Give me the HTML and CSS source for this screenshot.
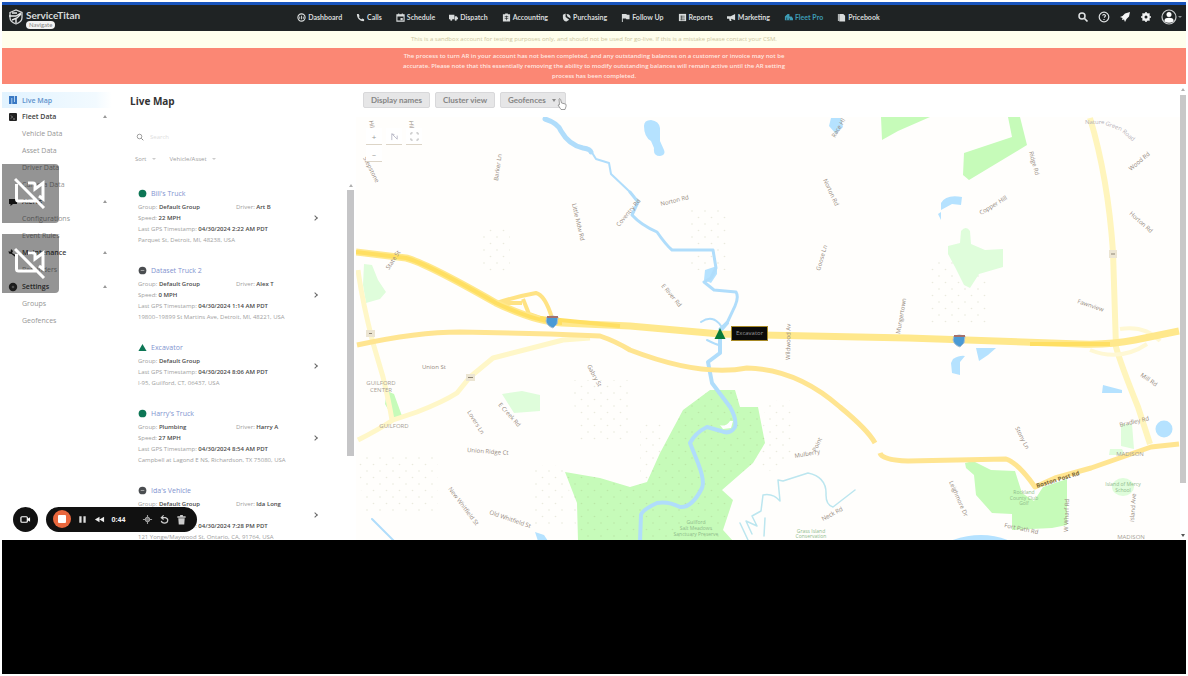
FILE: index.html
```html
<!DOCTYPE html>
<html lang="en">
<head>
<meta charset="utf-8">
<title>Live Map</title>
<link rel="stylesheet" href="styles.css">
</head>
<body>
<div class="stage">
<div class="app">
  <header class="topbar">
    <div class="brand">
      <svg class="brand-mark" viewBox="0 0 16 16"><path d="M2 3.500 8 1l6 2.500v5C14 12 11 14 8 15 5 14 2 12 2 8.500z" fill="none" stroke="#d5d8d9" stroke-width="1.300"/><path d="M1 7h7l5-3M4 11l5-2 4-4M4 4h5M8 9v5" fill="none" stroke="#e8eaea" stroke-width="1.400"/></svg>
      <div class="brand-text"><strong>ServiceTitan</strong><span class="tag">Navigate</span></div>
    </div>
    <nav class="nav">
      <a href="#"><svg viewBox="0 0 10 10"><circle cx="5" cy="5" r="4" fill="none" stroke="currentColor" stroke-width="1.300"/><path d="M3 6.500V4M5 7V3M7 6.500V4" stroke="currentColor"/></svg>Dashboard</a>
      <a href="#"><svg viewBox="0 0 10 10"><path d="M1 1h2l1 2.500-1 1C4 6 5 6.500 6 7l1-1 2 1v2C5 9.500 1 6 1 1z" fill="currentColor"/></svg>Calls</a>
      <a href="#"><svg viewBox="0 0 10 10"><path d="M1 2h8v7H1zM3 .5v2M7 .5v2" fill="none" stroke="currentColor" stroke-width="1.200"/><path d="M1 2h8v2H1zM5 5.500h2.500V8H5z" fill="currentColor"/></svg>Schedule</a>
      <a href="#"><svg viewBox="0 0 10 10"><path d="M0 2h6v5H0zM6.500 3.500H8.500L10 5.500V7H6.500z" fill="currentColor"/><circle cx="2.500" cy="7.500" r="1.200" fill="currentColor"/><circle cx="7.500" cy="7.500" r="1.200" fill="currentColor"/></svg>Dispatch</a>
      <a href="#"><svg viewBox="0 0 10 10"><path d="M1 1.500h2.500V.5h3v1H9V9.500H1z" fill="currentColor"/><path d="M3 4h4M3 6h4M5 3v5" stroke="#1f2324" stroke-width=".7"/></svg>Accounting</a>
      <a href="#"><svg viewBox="0 0 10 10"><path d="M1 2 4 .5v4l4 3L5 9.500Q1 9 1 5zM5 1q5 0 4.500 5L6 4z" fill="currentColor"/></svg>Purchasing</a>
      <a href="#"><svg viewBox="0 0 10 10"><path d="M1 1h5l.5 1H9.500v5H6l-.5-1H2v4H1z" fill="currentColor"/></svg>Follow Up</a>
      <a href="#"><svg viewBox="0 0 10 10"><path d="M1 1h8v8H1z" fill="currentColor"/><path d="M2.500 3.500h5M2.500 5.500h5M2.500 7.500h5M4 3v5" stroke="#1f2324" stroke-width=".6"/></svg>Reports</a>
      <a href="#"><svg viewBox="0 0 10 10"><path d="M0 3.500h4L9 1v7L4.500 6.500 5 9H3L2.300 6.500H0z" fill="currentColor"/></svg>Marketing</a>
      <a href="#" class="active"><svg viewBox="0 0 10 10"><path d="M1 8V4l3-3h2v3h2.500L10 6v2zM1 9.500h8" fill="currentColor"/><path d="M3 8V5M6 8V6" stroke="#1f2324" stroke-width=".7"/></svg>Fleet Pro</a>
      <a href="#"><svg viewBox="0 0 10 10"><path d="M1 1h1v8H1zM2.500 1H7l2 2v6.500H2.500z" fill="currentColor"/></svg>Pricebook</a>
    </nav>
    <div class="tools">
      <button aria-label="Search"><svg viewBox="0 0 12 12"><circle cx="5" cy="5" r="3" fill="none" stroke="#dfe2e3" stroke-width="1.500"/><path d="m7.500 7.500 3 3" stroke="#dfe2e3" stroke-width="1.700"/></svg></button>
      <button aria-label="Help"><svg viewBox="0 0 12 12"><circle cx="6" cy="6" r="4.800" fill="none" stroke="#dfe2e3" stroke-width="1.200"/><path d="M4.500 4.500Q6 2.500 7.500 4.500 7.500 5.500 6 6.500M6 8v1" fill="none" stroke="#dfe2e3" stroke-width="1.200"/></svg></button>
      <button aria-label="What's new"><svg viewBox="0 0 12 12"><path d="M11 1 6 2.500 3.500 5 1 6l2.500 1L3 9l2-.5L6 11l1.500-3L10 5.500z" fill="#f4f5f5"/></svg></button>
      <button aria-label="Settings"><svg viewBox="0 0 12 12"><circle cx="6" cy="6" r="2.700" fill="none" stroke="#f4f5f5" stroke-width="2.400"/><path d="M6 1v1.500M6 9.500V11M1 6h1.500M9.500 6H11M2.500 2.500l1 1M8.500 8.500l1 1M9.500 2.500l-1 1M3.500 8.500l-1 1" stroke="#f4f5f5" stroke-width="1.500"/></svg></button>
      <button class="account" aria-label="Account"><svg viewBox="0 0 16 16"><circle cx="8" cy="8" r="7" fill="none" stroke="#c9cccd" stroke-width="1.200"/><circle cx="8" cy="5.500" r="2.500" fill="#fff"/><path d="M3.500 12.500V11Q4 8.800 8 8.800T12.500 11v1.500Q8 15 3.500 12.500z" fill="#fff"/></svg><svg class="tiny" viewBox="0 0 6 6"><path d="M1 2h4L3 4z" fill="#8c9092"/></svg></button>
    </div>
  </header>
  <p class="notice">This is a sandbox account for testing purposes only, and should not be used for go-live. If this is a mistake please contact your CSM.</p>
  <p class="alert">The process to turn AR in your account has not been completed, and any outstanding balances on a customer or invoice may not be<br>accurate. Please note that this essentially removing the ability to modify outstanding balances will remain active until the AR setting<br>process has been completed.</p>

  <div class="body">
    <aside class="side">
      <a href="#" class="head current"><svg viewBox="0 0 10 10"><path d="M1 1h8v8H1z" fill="#3a79c4"/><path d="M3.800 3v6M6.500 1v6" stroke="#cfe6fa" stroke-width=".8"/></svg>Live Map</a>
      <button class="head"><svg viewBox="0 0 10 10"><rect x="1" y="1" width="8" height="8" rx="1" fill="#222"/><path d="m3 3.500 1.500 1.500L3 6.500M5 7h2" stroke="#aaa" fill="none" stroke-width=".8"/></svg>Fleet Data<i></i></button>
      <a href="#">Vehicle Data</a><a href="#">Asset Data</a><a href="#">Driver Data</a><a href="#">Camera Data</a>
      <button class="head"><svg viewBox="0 0 10 10"><path d="M1 2h8v5H5L2.500 9V7H1z" fill="#222"/></svg>Alerts<i></i></button>
      <a href="#">Configurations</a><a href="#">Event Rules</a>
      <button class="head"><svg viewBox="0 0 10 10"><path d="M3 1 5 3 4 5 9 8 8 9.500 3.500 6 1 5.500.5 3 2.500 4z" fill="#222"/></svg>Maintenance<i></i></button>
      <a href="#">Reminders</a>
      <button class="head"><svg viewBox="0 0 10 10"><circle cx="5" cy="5" r="4.200" fill="#333"/><circle cx="5" cy="5" r="1.300" fill="#888"/></svg>Settings<i></i></button>
      <a href="#">Groups</a><a href="#">Geofences</a>
    </aside>

    <section class="list">
      <h1>Live Map</h1>
      <label class="search"><svg viewBox="0 0 8 8"><circle cx="3.500" cy="3.500" r="2.300" fill="none" stroke="#888" stroke-width=".8"/><path d="m5.300 5.300 2 2" stroke="#888"/></svg><input type="text" placeholder="Search" aria-label="Search"></label>
      <div class="sort"><button>Sort<i></i></button><button>Vehicle/Asset<i></i></button></div>
      <div class="cards">
        <article class="card">
          <h2><svg viewBox="0 0 10 10"><circle cx="5" cy="5" r="4.300" fill="#0d7655"/></svg><a href="#">Bill's Truck</a></h2>
          <div class="pair"><p>Group: <b>Default Group</b></p><p>Driver: <b>Art B</b></p></div>
          <p>Speed: <b>22 MPH</b></p>
          <p>Last GPS Timestamp: <b>04/30/2024 2:22 AM PDT</b></p>
          <p>Parquet St, Detroit, MI, 48238, USA</p><span class="go"></span>
        </article>
        <article class="card">
          <h2><svg viewBox="0 0 10 10"><circle cx="5" cy="5" r="4.300" fill="#4a4d50"/><path d="M3 5h4" stroke="#aaa"/></svg><a href="#">Dataset Truck 2</a></h2>
          <div class="pair"><p>Group: <b>Default Group</b></p><p>Driver: <b>Alex T</b></p></div>
          <p>Speed: <b>0 MPH</b></p>
          <p>Last GPS Timestamp: <b>04/30/2024 1:14 AM PDT</b></p>
          <p>19800–19899 St Martins Ave, Detroit, MI, 48221, USA</p><span class="go"></span>
        </article>
        <article class="card">
          <h2><svg viewBox="0 0 10 10"><path d="m5 1 4.500 8h-9z" fill="#0d7655"/></svg><a href="#">Excavator</a></h2>
          <p>Group: <b>Default Group</b></p>
          <p>Last GPS Timestamp: <b>04/30/2024 8:06 AM PDT</b></p>
          <p>I-95, Guilford, CT, 06437, USA</p><span class="go"></span>
        </article>
        <article class="card">
          <h2><svg viewBox="0 0 10 10"><circle cx="5" cy="5" r="4.300" fill="#0d7655"/></svg><a href="#">Harry's Truck</a></h2>
          <div class="pair"><p>Group: <b>Plumbing</b></p><p>Driver: <b>Harry A</b></p></div>
          <p>Speed: <b>27 MPH</b></p>
          <p>Last GPS Timestamp: <b>04/30/2024 8:54 AM PDT</b></p>
          <p>Campbell at Lagond E NS, Richardson, TX 75080, USA</p><span class="go"></span>
        </article>
        <article class="card">
          <h2><svg viewBox="0 0 10 10"><circle cx="5" cy="5" r="4.300" fill="#4a4d50"/><path d="M3 5h4" stroke="#aaa"/></svg><a href="#">Ida's Vehicle</a></h2>
          <div class="pair"><p>Group: <b>Default Group</b></p><p>Driver: <b>Ida Long</b></p></div>
          <p>Speed: <b>0 MPH</b></p>
          <p>Last GPS Timestamp: <b>04/30/2024 7:28 PM PDT</b></p>
          <p>121 Yonge/Maywood St, Ontario, CA, 91764, USA</p><span class="go"></span>
        </article>
      </div>
      <div class="list-scroll"><i></i><span></span></div>
    </section>

    <main class="map-pane">
      <div class="map-tools">
        <button>Display names</button><button>Cluster view</button><button class="drop">Geofences<i></i>
        <svg class="cursor" viewBox="0 0 10 12"><path d="M2 1q1-1 1.600.5L4.500 5 8.500 6q1 .6.500 2.500L8 11.500H4L1 7l1.500-.3z" fill="#fff" stroke="#777" stroke-width=".7"/></svg></button>
      </div>
      <div class="map">
        <svg class="map-art" viewBox="356 117 824 424" preserveAspectRatio="xMinYMin slice">
          <defs><pattern id="dots" width="13" height="13" patternUnits="userSpaceOnUse"><circle cx="3" cy="3" r=".8" fill="#8a8f50" opacity=".18"/><circle cx="9.500" cy="9.500" r=".8" fill="#8a8f50" opacity=".18"/></pattern></defs>
          <rect x="356" y="117" width="824" height="424" fill="#fffefc"/>
          <g fill="url(#dots)">
            <path d="M358 455h80v60h-75zM535 465h30v60h-30zM765 400h30v60l-35 15zM640 420h25v60h-25zM930 260h60v65h-60zM570 380h60v60h-50zM480 225h30v50h-30zM690 210h40v60h-40z"/>
          </g>
          <g fill="#c6fbb9">
            <path d="M881 117h49l-32 14-16 9zM1008 117h12l7 28-58 35-6-5 1-22 48-16z"/>
            <path d="m565 472 35 6 30 9 17-5 13-29 23-43 27-20h25l5 17h18l7 36-12 20-31 27 11 10-10 30 10 11H578l-1-38z"/>
            <path d="m965 463 8-2 18 9 24 1 7 22 12 8 9-14 24-8v46l-15 3-40 2v-16l-20-1-16-18-2-20-8-7z"/>
            <path d="m387 391 7 3 8 22-9 2-8-14z"/>
          </g>
          <path d="m565 472 35 6 30 9 17-5 13-29 23-43 27-20h25l5 17h18l7 36-12 20-31 27 11 10-10 30 10 11H578z" fill="url(#dots)"/>
          <g fill="#dffddb">
            <path d="m364 264 8 1 6 15 8 12-6 7-14 4-3-18zM502 394l20-3 18 4v16l-26 2zM948 246l12-3 1-12q5-6 9 0l1 13 14 6 18-1v18l-24 7-9 14-6-3-9-18-7-13z"/><path d="M1121 424h11l2 25-13-3zM1110 449h12l3 6h-16z"/><ellipse cx="1123" cy="487" rx="11" ry="9"/>
          </g>
          <g fill="#b5e2ff">
            <path d="M644 126q0-6 7-6 8 1 9 8v13l4 9q2 5-4 6-7 0-6-8l-3-7q-7-4-7-15zM831 118h10l2 9-7 7-7-8zM717 266l-12 4-1 10 7 3 6-9zM941 203q5-9 21-6l-1 8-9-1-11 6zM938 214l3-2v8zM976 348l20 0-8 7-9 6zM953 359q7-4 12-3l-5 6v13l-8-2-1-10zM1103 385l19 5v3h-20z"/>
            <circle cx="1164" cy="429" r="8.500"/><path d="M535 532l9 3 4 6h-10zM950 541q32-12 60 0z"/>
          </g>
          <g fill="none" stroke="#b0ddfb" stroke-linecap="round" stroke-linejoin="round">
            <path stroke-width="5" d="M545 119q13 4 16 12 8 14 22 17 7 1 8 4"/>
            <path stroke-width="2" d="m591 151 5 8 13 4 2 11 19 18"/>
            <path stroke-width="3" d="m630 192 8 10-6 13q9 10 25 17 9 13 15 18h41l3 18-5 10-7 4 10 8 22 2q3 5-1 14l-8 17-7 6"/>
            <path stroke-width="4" d="m727 323-7 8v22l-12 9 4 21 18 24q7 12 5 20-5 8-14 4l-14-4q-12 6-17 16l8 20q7 18 4 25-10 20-22 19-12-6-23-4-15 7-16 12l-1 26"/>
            <path stroke-width="2" d="m701 322q12-8 20 4M707 340q10 5 12 5M372 519l24 24"/>
            <path stroke-width="1.500" stroke="#bce6ef" d="m855 490-22 17q-7-2-7-12 1-18-18-22l-25 8-5-1 2 21q-7-8-17-6l-2 16-9 5 5 10-11-5 6 13M765 518l-1 18M740 523l8 17"/>
          </g>
          <path d="M720 425q6 2 10-4l3 0-2 7-8 1z" fill="#fff"/>
          <g fill="none" stroke-linecap="butt" stroke-linejoin="round">
            <path d="M358 440q20-10 35-20l24-8q26-10 40-19l13-16 23-19 70-18 27-2M358 270q4 30 15 73l10 34q6 25 9 43" stroke="#fff7c8" stroke-width="5"/>
            <path d="M1090 118q18 60 23 134l3 95q5 18 22 60l12 37" stroke="#fff5bd" stroke-width="6"/>
            <path d="M1090 350q30 12 57-6M1120 329q25-4 40 12" stroke="#fff8d4" stroke-width="4"/>
            <path d="M357 345q60-13 103-13l90 2 50 2q15 5 30 14 70 27 117 18 50 1 93 39 28 23 35 36M880 453q2 7 28 8l98-2q12 4 29 28l20-9 36-10 60-21 28-3" stroke="#ffe591" stroke-width="5"/>
            <path d="M497 303q17-6 39-10 9 2 16 25M523 299l6 15 17 6M497 303h25" stroke="#ffe384" stroke-width="4"/>
            <path d="M356 252l50 6q20 5 90 45 40 19 66 20l68 3 90 8 188 4 172 6q30 1 55-4l44-9" stroke="#ffe88c" stroke-width="7"/>
            <path d="M356 252l50 6q20 5 90 45 40 19 66 20M540 318l80 8M1030 344h80" stroke="#ffdf62" stroke-width="4"/>
          </g>
          <g><path d="M547 317q5-2 11 0l-1 7-4 4q-6-2-7-7z" fill="#4a9ad5" stroke="#a5bdd0"/><path d="M547 316h11v2h-11z" fill="#a5706b"/><path d="M954 336q5-2 11 0l-1 7-4 4q-6-2-7-7z" fill="#4a9ad5" stroke="#a5bdd0"/><path d="M954 335h11v2h-11z" fill="#a5706b"/></g>
          <g fill="#ece5d2"><path d="M366 330h9v7h-9zM466 374h9v7h-9zM1109 250h8v8h-8z"/></g>
          <g stroke="#8e8574"><path d="M369 333.500h3M468 377.500h5M1111 254h4"/></g>
          <g class="street">
            <text transform="translate(363 158) rotate(63)">Stepstone</text><text transform="translate(498 181) rotate(-82)">Barker Ln</text><text transform="translate(572 204) rotate(77)">Little Mdw Rd</text><text transform="translate(619 227) rotate(-50)">Coventry Rd</text>
            <text transform="translate(661 206) rotate(-14)">Norton Rd</text><text transform="translate(835 138) rotate(-60)">Race Hl</text><text transform="translate(823 180) rotate(65)">Norton Rd</text><text transform="translate(820 271) rotate(-74)">Goose Ln</text><text transform="translate(661 286) rotate(50)">E River Rd</text>
            <text transform="translate(389 270) rotate(-57)">State St</text><text transform="translate(1029 152) rotate(75)">Ridge Rd</text><text transform="translate(981 215) rotate(-31)">Copper Hill</text><text transform="translate(1131 171) rotate(-40)">Wood Rd</text><text transform="translate(1129 214) rotate(42)">Horton Rd</text><text transform="translate(1077 303) rotate(19)">Fawnview</text>
            <text transform="translate(900 334) rotate(-80)">Mungertown</text><text transform="translate(790 360) rotate(-89)">Wildwood Av</text><text transform="translate(422 369)">Union St</text><text transform="translate(587 366) rotate(62)">Gabry St</text><text transform="translate(498 405) rotate(48)">E Creek Rd</text><text transform="translate(467 412) rotate(58)">Lovers Ln</text><text transform="translate(467 452) rotate(4)">Union Ridge Ct</text><text transform="translate(448 489) rotate(53)">New Whitfield St</text><text transform="translate(489 514) rotate(19)">Old Whitfield St</text>
            <text transform="translate(795 458) rotate(-10)">Mulberry</text><text transform="translate(816 452) rotate(-65)">Point</text><text transform="translate(823 521) rotate(-28)">Neck Rd</text><text transform="translate(1015 428) rotate(63)">Stony Ln</text><text transform="translate(949 482) rotate(66)">Leighmore Dr</text><text transform="translate(1004 527) rotate(12)">Fort Path Rd</text><text transform="translate(1068 532) rotate(-88)">W Wharf Rd</text><text transform="translate(1134 522) rotate(-86)">Island Ave</text><text transform="translate(1140 376) rotate(35)">Mill Rd</text><text transform="translate(1120 427) rotate(-13)">Bradley Rd</text><text transform="translate(369 121) rotate(80)">Hill</text><text transform="translate(409 121) rotate(85)">Hill</text>
          </g>
          <g class="street pale"><text transform="translate(1085 124)">Nature</text><text transform="translate(1105 125) rotate(20)">Green</text><text transform="translate(1122 132) rotate(42)">Road</text></g>
          <text class="road" transform="translate(1037 488) rotate(-17)">Boston Post Rd</text>
          <g class="town"><text x="381" y="385">GUILFORD</text><text x="381" y="392">CENTER</text><text x="394" y="428">GUILFORD</text><text x="1130" y="456">MADISON</text><text x="1131" y="539">MADISON</text></g>
          <g class="park"><text x="1024" y="494">Rockland</text><text x="1024" y="500">County Club</text><text x="1024" y="505">Golf</text><text x="1123" y="486">Island of Mercy</text><text x="1123" y="492">School</text><text x="696" y="524">Guilford</text><text x="696" y="530">Salt Meadows</text><text x="696" y="536">Sanctuary Preserve</text><text x="811" y="533">Grass Island</text><text x="811" y="538">Conservation</text></g>
          <path d="m720 328 5.500 11h-11z" fill="#087b38"/>
        </svg>
        <div class="zoom"><button aria-label="Zoom in">+</button><button aria-label="Zoom out">–</button></div>
        <div class="map-modes"><button aria-label="Lasso"><svg viewBox="0 0 10 10"><path d="M2 9V2l6 6V4M2 2l3 1" fill="none" stroke="#b9b9c6"/></svg></button><button aria-label="Fullscreen"><svg viewBox="0 0 10 10"><path d="M1 3V1h2M7 1h2v2M9 7v2H7M3 9H1V7" fill="none" stroke="#b0b0b0"/></svg></button></div>
        <span class="tip">Excavator</span>
      </div>
    </main>
    <div class="page-scroll"><i></i><span></span><i class="down"></i></div>
  </div>

  <div class="cams">
    <div><svg viewBox="0 0 32 32"><path d="M14 6h5q2 0 2 2v4l8-6v16l-4-3M2.500 7v15q0 2 2 2H22M1 2l29 29" fill="none" stroke="#fff" stroke-width="3"/></svg></div>
    <div><svg viewBox="0 0 32 32"><path d="M14 6h5q2 0 2 2v4l8-6v16l-4-3M2.500 7v15q0 2 2 2H22M1 2l29 29" fill="none" stroke="#fff" stroke-width="3"/></svg></div>
  </div>
  <div class="recorder">
    <button class="cam" aria-label="Camera"><svg viewBox="0 0 12 12"><rect x="1" y="3" width="7" height="6" rx="1" fill="none" stroke="#fff" stroke-width="1.300"/><path d="m8 5.500 3-2v5l-3-2" fill="#fff"/></svg></button>
    <div class="pill">
      <button class="stop" aria-label="Stop"><i></i></button>
      <button aria-label="Pause"><svg viewBox="0 0 12 12"><path d="M2.500 2.500h2.500v7H2.500zM7 2.500h2.500v7H7z" fill="#ddd"/></svg></button>
      <button aria-label="Rewind"><svg viewBox="0 0 12 12"><path d="M6 3v6L1 6zM11 3v6L6 6z" fill="#eee"/></svg></button>
      <time>0:44</time>
      <button aria-label="Effects"><svg viewBox="0 0 12 12"><path d="M6 1v10M1 6h10" stroke="#999" stroke-width="1.200"/><circle cx="6" cy="6" r="2.500" fill="#777" stroke="#aaa"/></svg></button>
      <button aria-label="Restart"><svg viewBox="0 0 12 12"><path d="M3 4h4q3 1 2.500 3.500T6 10 2.500 7.500M5 1.500 2.500 4 5 6" fill="none" stroke="#ccc" stroke-width="1.300"/></svg></button>
      <button aria-label="Delete"><svg viewBox="0 0 12 12"><path d="M1.500 2.500H4.500V1h3v1.500h3v1.500h-9zM2.500 4.500h7L9 11.500H3z" fill="#ccc"/></svg></button>
    </div>
  </div>
</div>
<div class="letterbox"></div>
</div>
</body>
</html>
```
FILE: styles.css
```css
* { box-sizing: border-box; }
body { margin: 0; background: #fff; font-family: "Open Sans", "Noto Sans", sans-serif; font-size: 6px; color: #222; }
h1, h2, p { margin: 0; }
a { color: inherit; text-decoration: none; }
button { font: inherit; color: inherit; border: 0; padding: 0; background: none; display: flex; align-items: center; }
svg { display: block; flex: none; }

.stage { height: 100vh; padding: 2px; display: flex; flex-direction: column; }
.app { flex: 4 1 0; min-height: 0; display: flex; flex-direction: column; position: relative; overflow: hidden; }
.letterbox { flex: 1 1 0; background: #000; }

.topbar { flex: none; height: 29px; border-top: 3px solid #1854bd; background: #1f2324; display: flex; align-items: center; padding: 0 3px 2px 0; color: #d8dbdb; font-family: Lato, sans-serif; }
.brand { flex: 0 0 25%; display: flex; align-items: center; gap: 2px; padding-left: 6px; }
.brand-mark { width: 16px; height: 16px; }
.brand-text { display: flex; flex-direction: column; align-items: flex-start; font-size: 10px; line-height: 11px; padding-top: 4px; }
.tag { background: #f4f4f4; color: #888; font-size: 6px; line-height: 8px; border-radius: 4px; padding: 0 3px; }
.nav { display: flex; gap: 14px; font-size: 7px; line-height: 10px; font-weight: 700; }
.nav a { display: flex; align-items: center; gap: 2px; white-space: nowrap; }
.nav svg { width: 9px; height: 9px; }
.nav .active { color: #3d9cb5; }
.tools { margin-left: auto; display: flex; align-items: center; gap: 9px; }
.tools svg { width: 12px; height: 12px; }
.tools .account svg { width: 16px; height: 16px; }
.tools .account .tiny { width: 6px; height: 6px; }

.notice { flex: none; background: #ffffed; color: #cdc7a0; text-align: center; line-height: 17px; }
.alert { flex: none; background: #fb8774; color: #ffe9e2; text-align: center; line-height: 10px; padding: 3px 0; font-weight: 600; }

.body { flex: 1; min-height: 0; display: flex; padding-top: 8px; overflow: hidden; }
.side { flex: none; width: 110px; display: flex; flex-direction: column; font-size: 7px; color: #959595; }
.side a, .side button { flex: none; height: 17px; display: flex; align-items: center; padding-left: 20px; width: 100%; }
.side .head { padding: 0 5px 0 6px; gap: 4px; color: #444; font-weight: 600; }
.side .head svg { width: 10px; height: 10px; }
.side .current { height: 16px; background: linear-gradient(90deg, #e2f3ff, #f2faff 85%, #fff); color: #5f92cc; }
.side i { margin-left: auto; border: 2px solid transparent; border-bottom: 3px solid #999; border-top: 0; }

.list { flex: none; width: 244px; margin-top: -8px; padding: 9px 0 0 18px; display: flex; flex-direction: column; position: relative; color: #a0a0a0; }
.list h1 { flex: none; font-size: 10px; line-height: 16px; color: #333; }
.search { flex: none; display: flex; align-items: center; gap: 6px; margin-top: 20px; padding-left: 6px; height: 16px; }
.search svg { width: 8px; height: 8px; }
.search input { border: 0; outline: 0; background: none; font: inherit; width: 100px; padding: 0; }
.search input::placeholder { color: #dedede; opacity: 1; }
.sort { flex: none; display: flex; gap: 14px; margin-top: 8px; padding-left: 5px; height: 12px; }
.sort button { gap: 5px; }
.sort i { border: 2px solid transparent; border-top-color: #ccc; border-bottom: 0; }
.cards { flex: none; margin-top: 20px; padding-left: 8px; width: 200px; display: flex; flex-direction: column; gap: 16px; }
.card { position: relative; flex: none; line-height: 11px; white-space: nowrap; }
.card h2 { font-size: 7px; line-height: 17px; font-weight: 400; color: #7f93cf; display: flex; align-items: center; gap: 4px; }
.card h2 svg { width: 9px; height: 9px; }
.card b { color: #4a4a4a; font-weight: 600; }
.pair { display: grid; grid-template-columns: 98px auto; }
.go { position: absolute; right: 13px; top: 50%; width: 4px; height: 4px; border: solid #666; border-width: 1px 1px 0 0; rotate: 45deg; }
.list-scroll { position: absolute; right: 2px; top: 100px; width: 7px; display: flex; flex-direction: column; align-items: center; gap: 3px; }
.list-scroll span { width: 7px; height: 266px; background: #c5c5c7; }
.list-scroll i, .page-scroll i { border: 2px solid transparent; border-bottom: 3px solid #b0b0b0; border-top: 0; }

.map-pane { flex: 1; min-width: 0; display: flex; flex-direction: column; }
.map-tools { flex: none; display: flex; gap: 5px; padding: 0 7px 9px; font: 700 8px/14px Lato, sans-serif; color: #858585; }
.map-tools button { height: 16px; padding: 0 7px; background: #e6e6e7; border: 1px solid #d8d8da; border-radius: 2px; white-space: nowrap; }
.map-tools .drop { position: relative; gap: 6px; padding-right: 9px; }
.map-tools i { border: 2px solid transparent; border-top: 3px solid #888; border-bottom: 0; }
.cursor { position: absolute; right: -2px; top: 5px; width: 10px; height: 12px; }
.map { flex: 1; min-height: 0; position: relative; overflow: hidden; }
.map-art { width: 100%; height: 100%; }
.street { font-size: 6px; fill: #95897d; }
.pale { fill: #b5b1b8; }
.road { font-size: 6px; font-weight: 700; fill: #7d6939; }
.town { font-size: 6px; fill: #a79f97; text-anchor: middle; }
.park { font-size: 5px; fill: #8fbb8b; text-anchor: middle; }
.zoom, .map-modes { position: absolute; top: 11px; left: 10px; }
.map-modes { left: 30px; display: flex; gap: 4px; }
.zoom button, .map-modes button { width: 16px; height: 17px; justify-content: center; background: #fff; border-bottom: 1px solid #ddd5c7; color: #999; font-size: 8px; }
.map-modes svg { width: 9px; height: 9px; }
.tip { position: absolute; left: 46%; top: 50%; margin: -2px 0 0 -4px; width: 37px; height: 15px; background: #0b0b0a; border: 1px solid #a88a27; color: #999; line-height: 13px; text-align: center; }

.page-scroll { flex: none; width: 6px; margin-top: -4px; display: flex; flex-direction: column; align-items: center; gap: 4px; }
.page-scroll span { width: 6px; height: 86%; background: #c8c8c8; }
.page-scroll .down { margin: auto 0 3px; rotate: 180deg; border-bottom-color: #555; }

.cams { position: absolute; left: 0; top: 162px; display: flex; flex-direction: column; gap: 11px; }
.cams div { width: 57px; height: 59px; padding: 13px 12px; background: rgba(0, 0, 0, .42); border-radius: 0 4px 4px 0; }
.cams svg { width: 32px; height: 32px; }

.recorder { position: absolute; left: 11px; bottom: 8px; display: flex; align-items: center; gap: 8px; }
.recorder button { flex: none; justify-content: center; }
.recorder svg { width: 11px; height: 11px; }
.cam { width: 25px; height: 25px; border-radius: 50%; background: #111; }
.pill { height: 25px; width: 151px; border-radius: 13px; background: #111; display: flex; align-items: center; padding: 0 10px 0 7px; justify-content: space-between; color: #eee; }
.pill time { font-size: 7px; font-weight: 700; padding-right: 10px; }
.recorder .stop { width: 18px; height: 18px; border-radius: 50%; background: #e8673d; }
.stop i { width: 8px; height: 8px; background: #fff; border-radius: 1px; }
```
